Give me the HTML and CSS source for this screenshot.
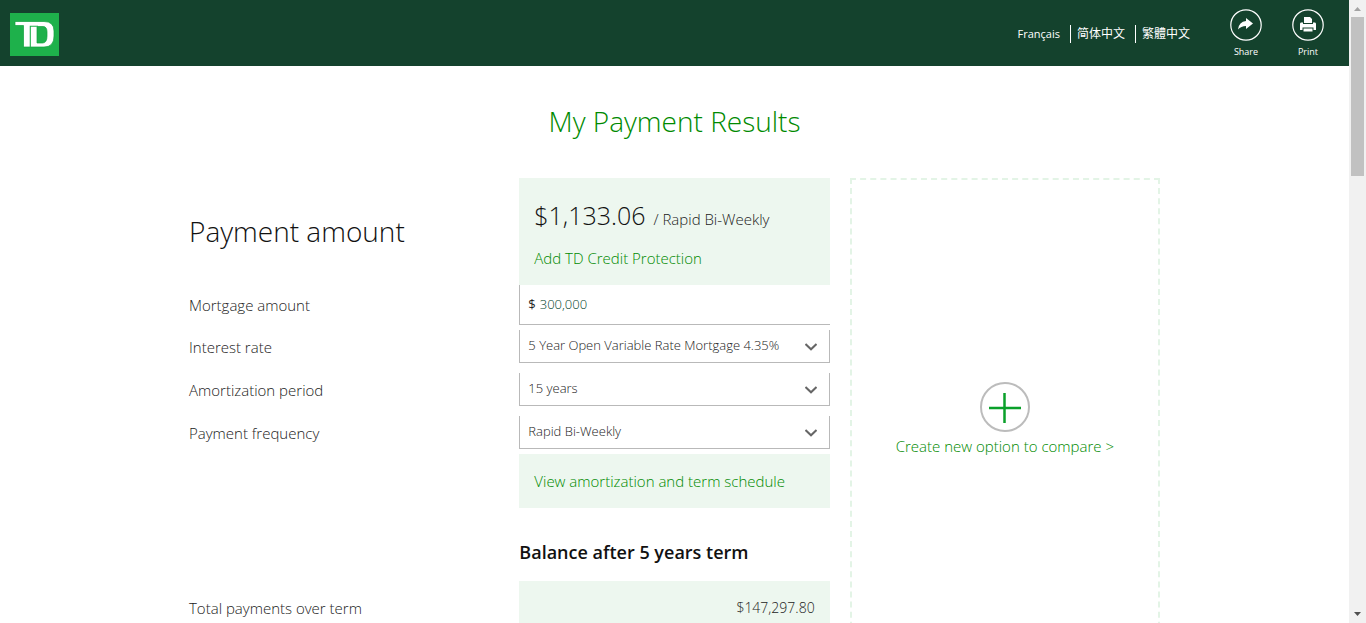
FILE: index.html
```html
<!DOCTYPE html>
<html lang="en">
<head>
<meta charset="utf-8">
<meta name="viewport" content="width=device-width, initial-scale=1">
<title>My Payment Results</title>
<link rel="stylesheet" href="styles.css">
</head>
<body>
<div class="window">
  <div class="page">
    <header class="header">
      <a class="logo" href="#" aria-label="TD home">
        <svg viewBox="0 0 49 43" width="49" height="43" aria-hidden="true">
          <rect width="49" height="43" fill="#1eb14b"/>
          <path d="M5 8.500H34Q44 8.500 44 18V23Q44 34 34 34H13.500V12.500H5Z" fill="#fff" stroke="#0fa03c" stroke-width=".7"/>
          <path d="M27 13.500H33Q37 13.500 37 19V23Q37 30 32.500 30H27Z" fill="#1eb14b" stroke="#0fa03c" stroke-width=".7"/>
          <path d="M20.300 34V13.300H28" fill="none" stroke="#1eb14b" stroke-width="1.100"/>
        </svg>
      </a>
      <nav class="languages" aria-label="Language">
        <a href="#">Français</a>
        <a class="chinese" href="#" lang="zh-Hans">简体中文</a>
        <a class="chinese" href="#" lang="zh-Hant">繁體中文</a>
      </nav>
      <div class="actions">
        <button class="action" type="button">
          <svg viewBox="0 0 32 32" width="32" height="32" aria-hidden="true">
            <circle cx="16" cy="16" r="15.200" fill="none" stroke="#fff" stroke-width="1.200"/>
            <path d="M16 9L23 14.500L16 20V17Q11 17 8 20.500Q9 12.500 16 12Z" fill="#fff"/>
          </svg>
          <span>Share</span>
        </button>
        <button class="action" type="button">
          <svg viewBox="0 0 32 32" width="32" height="32" aria-hidden="true">
            <circle cx="16" cy="16" r="15.200" fill="none" stroke="#fff" stroke-width="1.200"/>
            <path d="M12 8H18L20 10V14H12Z" fill="#fff"/>
            <path d="M9 13.500H11V15H21V13.500H23Q24 13.500 24 15V21H21.500V18.500H10.500V21H8V15Q8 13.500 9 13.500Z" fill="#fff"/>
            <path d="M11.500 19.500H20.500V22.500H11.500Z" fill="#fff"/>
          </svg>
          <span>Print</span>
        </button>
      </div>
    </header>

    <main class="content">
      <h1 class="title">My Payment Results</h1>
      <div class="columns">
        <section class="results">
          <div class="row">
            <h2 class="row-title">Payment amount</h2>
            <div class="summary">
              <p class="payment"><span class="amount">$1,133.06</span> / Rapid Bi-Weekly</p>
              <a class="link" href="#">Add TD Credit Protection</a>
            </div>
          </div>
          <div class="row">
            <label for="mortgage">Mortgage amount</label>
            <div class="money">
              <span>$</span>
              <input id="mortgage" type="text" value="300,000">
            </div>
          </div>
          <div class="row row-select">
            <label for="rate">Interest rate</label>
            <div class="picker">
              <select id="rate"><option>5 Year Open Variable Rate Mortgage 4.35%</option></select>
              <svg class="chevron" viewBox="0 0 12 8" width="12" height="8" aria-hidden="true"><path d="M0.500 1L6 6.300L11.500 1"/></svg>
            </div>
          </div>
          <div class="row row-select">
            <label for="period">Amortization period</label>
            <div class="picker">
              <select id="period"><option>15 years</option></select>
              <svg class="chevron" viewBox="0 0 12 8" width="12" height="8" aria-hidden="true"><path d="M0.500 1L6 6.300L11.500 1"/></svg>
            </div>
          </div>
          <div class="row row-select">
            <label for="frequency">Payment frequency</label>
            <div class="picker">
              <select id="frequency"><option>Rapid Bi-Weekly</option></select>
              <svg class="chevron" viewBox="0 0 12 8" width="12" height="8" aria-hidden="true"><path d="M0.500 1L6 6.300L11.500 1"/></svg>
            </div>
          </div>
          <div class="row">
            <div class="schedule"><a class="link" href="#">View amortization and term schedule</a></div>
          </div>
          <div class="row">
            <h2 class="subtitle">Balance after 5 years term</h2>
          </div>
          <div class="row">
            <span>Total payments over term</span>
            <span class="total">$147,297.80</span>
          </div>
        </section>
        <section class="compare">
          <button class="create" type="button">
            <svg viewBox="0 0 50 50" width="50" height="50" aria-hidden="true">
              <circle cx="25" cy="25" r="24" fill="none" stroke="#bcbcbc" stroke-width="2"/>
              <path d="M9 26H41M24.500 11V41" fill="none" stroke="#0aa02a" stroke-width="2.500"/>
            </svg>
            <span>Create new option to compare &gt;</span>
          </button>
        </section>
      </div>
    </main>
  </div>
  <div class="scrollbar" aria-hidden="true">
    <svg viewBox="0 0 17 17" width="17" height="17"><path d="M5 11L8.500 7L12 11Z" fill="#a3a3a3"/></svg>
    <div class="track"><div class="thumb"></div></div>
    <svg viewBox="0 0 17 17" width="17" height="17"><path d="M5 6L8.500 10L12 6Z" fill="#505050"/></svg>
  </div>
</div>
</body>
</html>
```

FILE: styles.css
```css
* {
  box-sizing: border-box;
}

body {
  margin: 0;
  background: #fff;
  color: #222;
  font-family: "Open Sans", "Noto Sans", sans-serif;
  font-size: 15px;
  font-weight: 300;
  line-height: 20px;
}

h1,
h2,
p {
  margin: 0;
  font-weight: 300;
}

a {
  text-decoration: none;
}

button,
input,
select {
  padding: 0;
  border: 0;
  background: none;
  font: inherit;
}

.window {
  display: flex;
  height: 100vh;
  overflow: hidden;
}

.page {
  flex: 1;
  min-width: 0;
  overflow: hidden;
}

.header {
  display: flex;
  align-items: center;
  height: 66px;
  padding: 0 25px 0 10px;
  background: #14422d;
  color: #fff;
}

.logo {
  display: flex;
  margin-top: 2px;
}

.languages {
  display: flex;
  margin: 2px 40px 0 auto;
  font-family: "Open Sans", "Noto Sans CJK SC", sans-serif;
  font-size: 11px;
  font-weight: 400;
  line-height: 18px;
}

.languages a {
  padding-right: 10px;
  color: #fff;
}

.languages .chinese {
  padding-left: 6px;
  border-left: 1px solid #fff;
  font-size: 12px;
}

.languages .chinese:last-child {
  padding-right: 0;
}

.actions {
  display: flex;
  gap: 30px;
}

.action {
  display: flex;
  flex-direction: column;
  align-items: center;
  gap: 5px;
  width: 32px;
  color: #fff;
  font-size: 9px;
  font-weight: 400;
  line-height: 12px;
}

.content {
  max-width: 971px;
  margin: 0 auto;
}

.title {
  padding: 35px 0 37px;
  color: #008a00;
  font-size: 28px;
  line-height: 40px;
  text-align: center;
}

.columns {
  display: grid;
  grid-template-columns: repeat(3, 1fr);
  column-gap: 20px;
}

.results {
  grid-column: span 2;
}

.row {
  display: grid;
  grid-template-columns: 1fr 1fr;
  column-gap: 20px;
  align-items: center;
}

.row-title {
  padding-bottom: 2px;
  color: #111;
  font-size: 28px;
  line-height: 38px;
}

.summary {
  padding: 16px 15px;
  background: #edf7ef;
}

.payment {
  margin-bottom: 8px;
  line-height: 42px;
}

.amount {
  margin-right: 4px;
  color: #111;
  font-size: 25px;
}

.link,
.create {
  color: #008a00;
}

.summary .link {
  display: block;
  padding-bottom: 1px;
}

.money {
  display: flex;
  align-items: center;
  gap: 4px;
  height: 40px;
  padding: 0 0 2px 8px;
  border: solid #b9b9b9;
  border-width: 0 0 1px 1px;
  font-size: 13px;
}

.money span {
  font-weight: 400;
}

.money input {
  flex: 1;
  min-width: 0;
  color: #00432a;
}

.row-select {
  margin: 5px 0 10px;
}

.row-select + .row-select {
  margin-top: 0;
}

.picker {
  position: relative;
}

.picker select {
  width: 100%;
  height: 33px;
  padding: 0 30px 2px 8px;
  border: solid #b9b9b9;
  border-width: 0 1px 1px;
  appearance: none;
  color: #222;
  font-size: 13px;
}

.chevron {
  position: absolute;
  top: 13px;
  right: 13px;
  fill: none;
  stroke: #666;
  stroke-width: 2;
  pointer-events: none;
}

.schedule {
  grid-column: 2;
  margin-top: -5px;
  padding: 17px 15px;
  background: #edf7ef;
}

.subtitle {
  grid-column: 2;
  margin: 32px 0 16px;
  color: #111;
  font-size: 18px;
  font-weight: 600;
  line-height: 25px;
}

.total {
  padding: 17px 15px;
  background: #edf7ef;
  font-size: 14px;
  text-align: right;
}

.compare {
  display: flex;
  justify-content: center;
  min-height: 480px;
  padding-top: 202px;
  border: 2px dashed #e3f4e6;
}

.create {
  display: flex;
  flex-direction: column;
  align-items: center;
  align-self: flex-start;
  gap: 4px;
}

.scrollbar {
  display: flex;
  flex-direction: column;
  width: 17px;
  background: #f1f1f1;
}

.track {
  flex: 1;
  padding: 0 2px;
}

.thumb {
  height: 27%;
  background: #c1c1c1;
}
```
